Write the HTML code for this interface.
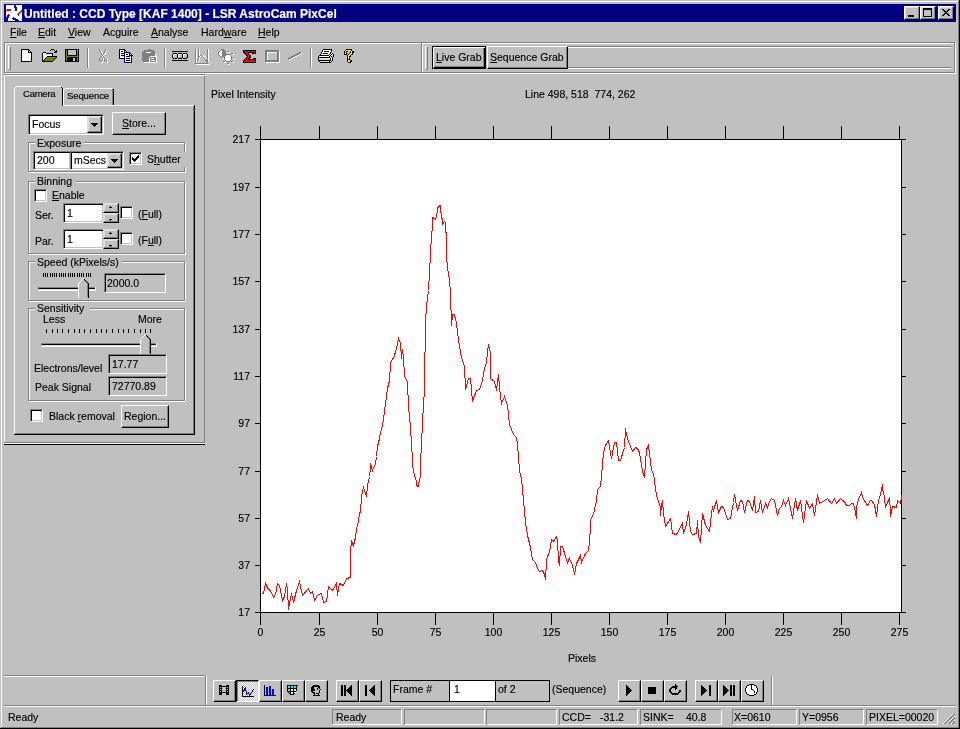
<!DOCTYPE html><html><head><meta charset="utf-8"><style>
html,body{margin:0;padding:0}
body{width:960px;height:729px;overflow:hidden;background:#c0c0c0;position:relative;font-family:"Liberation Sans",sans-serif;font-size:10.5px;color:#000}
.a{position:absolute}
.t{position:absolute;white-space:pre;line-height:13px;will-change:transform;-webkit-text-stroke:0.15px currentColor}
.t u{text-decoration:underline;text-underline-offset:1px}
.btn{position:absolute;box-sizing:border-box;background:#c0c0c0;border:1px solid;border-color:#fff #000 #000 #fff;box-shadow:inset -1px -1px #808080}
.sunk{position:absolute;box-sizing:border-box;background:#fff;border:1px solid;border-color:#808080 #fff #fff #808080;box-shadow:inset 1px 1px #000,inset -1px -1px #c0c0c0}
.grp{position:absolute;box-sizing:border-box;border:1px solid #808080;box-shadow:inset 1px 1px #fff,1px 1px #fff}
.pane{position:absolute;box-sizing:border-box;border:1px solid;border-color:#808080 #fff #fff #808080}
.chk{position:absolute;box-sizing:border-box;width:13px;height:13px;background:#fff;border:1px solid;border-color:#808080 #fff #fff #808080;box-shadow:inset 1px 1px #000,inset -1px -1px #c0c0c0}
.pressed{position:absolute;box-sizing:border-box;border:1px solid;border-color:#808080 #fff #fff #808080;background-color:#e0e0e0;background-image:repeating-conic-gradient(#fff 0 25%,#c0c0c0 0 50%);background-size:2px 2px}
svg{position:absolute;overflow:visible}
</style></head><body>

<div class="a" style="left:1px;top:1px;width:957px;height:1px;background:#fff"></div>
<div class="a" style="left:1px;top:1px;width:1px;height:726px;background:#fff"></div>
<div class="a" style="left:958px;top:1px;width:1px;height:727px;background:#808080"></div>
<div class="a" style="left:1px;top:727px;width:958px;height:1px;background:#808080"></div>
<div class="a" style="left:959px;top:0px;width:1px;height:729px;background:#000"></div>
<div class="a" style="left:0px;top:728px;width:960px;height:1px;background:#000"></div>
<div class="a" style="left:4px;top:4px;width:952px;height:18px;background:#000080"></div>
<svg style="left:6px;top:5px" width="16" height="16" shape-rendering="crispEdges"><path d="M0 0h8v1h-8zM10 0h6v1h-6zM0 1h8v1h-8zM10 1h6v1h-6zM0 2h8v1h-8zM11 2h5v1h-5zM0 3h9v1h-9zM11 3h5v1h-5zM0 4h1v1h-1zM5 4h4v1h-4zM11 4h5v1h-5zM5 5h4v1h-4zM11 5h4v1h-4zM0 6h14v1h-14zM0 7h13v1h-13zM15 7h1v1h-1zM0 8h12v1h-12zM14 8h2v1h-2zM0 9h2v1h-2zM3 9h8v1h-8zM13 9h3v1h-3zM0 10h1v1h-1zM4 10h8v1h-8zM13 10h3v1h-3zM0 11h1v1h-1zM3 11h13v1h-13zM3 12h4v1h-4zM8 12h8v1h-8zM2 13h4v1h-4zM10 13h6v1h-6zM2 14h5v1h-5zM12 14h4v1h-4zM2 15h7v1h-7zM13 15h3v1h-3z" fill="#fff"/><path d="M8 0h2v1h-2zM8 1h2v1h-2zM8 2h3v1h-3zM9 3h2v1h-2zM9 4h2v1h-2zM9 5h2v1h-2zM2 9h1v1h-1zM1 10h3v1h-3zM1 11h2v1h-2zM0 12h3v1h-3zM7 12h1v1h-1zM0 13h2v1h-2zM6 13h4v1h-4zM0 14h2v1h-2zM7 14h5v1h-5zM0 15h2v1h-2zM9 15h4v1h-4z" fill="#00f"/><path d="M1 4h4v1h-4zM0 5h5v1h-5zM15 5h1v1h-1zM14 6h2v1h-2zM13 7h2v1h-2zM12 8h2v1h-2zM11 9h2v1h-2zM12 10h1v1h-1z" fill="#f00"/></svg>
<div class="t" style="left:24px;top:8px;font-size:12px;color:#fff;font-weight:bold;">Untitled : CCD Type [KAF 1400] - LSR AstroCam PixCel</div>
<div class="btn" style="left:904px;top:6px;width:16px;height:14px;box-shadow:inset -1px -1px #808080, inset 1px 1px #dfdfdf"></div>
<div class="a" style="left:908px;top:15px;width:6px;height:2px;background:#000"></div>
<div class="btn" style="left:920px;top:6px;width:16px;height:14px;box-shadow:inset -1px -1px #808080, inset 1px 1px #dfdfdf"></div>
<div class="a" style="left:923px;top:8px;width:7px;height:6px;border:1px solid #000;border-top-width:2px"></div>
<div class="btn" style="left:938px;top:6px;width:16px;height:14px;box-shadow:inset -1px -1px #808080, inset 1px 1px #dfdfdf"></div>
<svg style="left:938px;top:6px" width="16" height="14" shape-rendering="crispEdges"><path d="M4 3h2v1h1v1h2v-1h1v-1h2v1h-1v1h-1v1h-1v1h1v1h1v1h1v1h-2v-1h-1v-1h-2v1h-1v1h-2v-1h1v-1h1v-1h1v-1h-1v-1h-1v-1h-1z" fill="#000"/></svg>
<div class="t" style="left:10px;top:26px;"><u>F</u>ile</div>
<div class="t" style="left:38px;top:26px;"><u>E</u>dit</div>
<div class="t" style="left:68px;top:26px;"><u>V</u>iew</div>
<div class="t" style="left:103px;top:26px;">Acguire</div>
<div class="t" style="left:151px;top:26px;"><u>A</u>nalyse</div>
<div class="t" style="left:201px;top:26px;">Hard<u>w</u>are</div>
<div class="t" style="left:258px;top:26px;"><u>H</u>elp</div>
<div class="grp" style="left:4px;top:42px;width:418px;height:31px;"></div>
<div class="grp" style="left:421px;top:42px;width:534px;height:31px;"></div>
<div class="a" style="left:8px;top:46px;width:3px;height:24px;box-sizing:border-box;border:1px solid;border-color:#fff #808080 #808080 #fff"></div>
<div class="a" style="left:425px;top:46px;width:3px;height:24px;box-sizing:border-box;border:1px solid;border-color:#fff #808080 #808080 #fff"></div>
<div class="a" style="left:87px;top:48px;width:1px;height:20px;background:#808080"></div>
<div class="a" style="left:88px;top:48px;width:1px;height:20px;background:#fff"></div>
<div class="a" style="left:164px;top:48px;width:1px;height:20px;background:#808080"></div>
<div class="a" style="left:165px;top:48px;width:1px;height:20px;background:#fff"></div>
<div class="a" style="left:310px;top:48px;width:1px;height:20px;background:#808080"></div>
<div class="a" style="left:311px;top:48px;width:1px;height:20px;background:#fff"></div>
<div class="a" style="left:432px;top:46px;width:54px;height:23px;box-sizing:border-box;border:1px solid #000;background:#c0c0c0;box-shadow:inset 1px 1px #fff,inset -1px -1px #000,inset -2px -2px #808080"></div>
<div class="t" style="left:436px;top:51px;"><u>L</u>ive Grab</div>
<div class="btn" style="left:487px;top:46px;width:81px;height:23px;"></div>
<div class="t" style="left:490px;top:51px;"><u>S</u>equence Grab</div>
<div class="a" style="left:568px;top:46px;width:383px;height:1px;background:#808080"></div>
<div class="a" style="left:568px;top:47px;width:383px;height:1px;background:#fff"></div>
<div class="a" style="left:568px;top:67px;width:383px;height:1px;background:#808080"></div>
<div class="a" style="left:568px;top:68px;width:383px;height:1px;background:#fff"></div>
<div class="a" style="left:4px;top:74px;width:201px;height:1px;background:#808080"></div>
<div class="a" style="left:4px;top:75px;width:201px;height:1px;background:#fff"></div>
<div class="a" style="left:4px;top:75px;width:1px;height:367px;background:#fff"></div>
<div class="a" style="left:204px;top:76px;width:1px;height:367px;background:#808080"></div>
<div class="a" style="left:4px;top:442px;width:201px;height:1px;background:#808080"></div>
<div class="a" style="left:4px;top:443px;width:201px;height:1px;background:#fff"></div>
<div class="a" style="left:4px;top:444px;width:201px;height:1px;background:#000"></div>
<div class="a" style="left:14px;top:105px;width:1px;height:330px;background:#fff"></div>
<div class="a" style="left:14px;top:105px;width:181px;height:1px;background:#fff"></div>
<div class="a" style="left:194px;top:105px;width:1px;height:330px;background:#000"></div>
<div class="a" style="left:193px;top:106px;width:1px;height:328px;background:#808080"></div>
<div class="a" style="left:14px;top:434px;width:181px;height:1px;background:#000"></div>
<div class="a" style="left:15px;top:433px;width:179px;height:1px;background:#808080"></div>
<div class="a" style="left:63px;top:89px;width:1px;height:16px;background:#fff"></div>
<div class="a" style="left:65px;top:88px;width:47px;height:1px;background:#fff"></div>
<div class="a" style="left:64px;top:89px;width:1px;height:1px;background:#fff"></div>
<div class="a" style="left:113px;top:89px;width:1px;height:16px;background:#000"></div>
<div class="a" style="left:112px;top:89px;width:1px;height:16px;background:#808080"></div>
<div class="t" style="left:67px;top:91px;font-size:9.6px;top:89px;letter-spacing:-0.15px">Sequence</div>
<div class="a" style="left:15px;top:87px;width:47px;height:19px;background:#c0c0c0"></div>
<div class="a" style="left:14px;top:88px;width:1px;height:18px;background:#fff"></div>
<div class="a" style="left:16px;top:86px;width:45px;height:1px;background:#fff"></div>
<div class="a" style="left:15px;top:87px;width:1px;height:1px;background:#fff"></div>
<div class="a" style="left:62px;top:88px;width:1px;height:18px;background:#000"></div>
<div class="a" style="left:61px;top:87px;width:1px;height:1px;background:#000"></div>
<div class="t" style="left:23px;top:88px;font-size:9.6px;top:87px;letter-spacing:-0.3px">Camera</div>
<div class="sunk" style="left:28px;top:114px;width:76px;height:21px;"></div>
<div class="btn" style="left:87px;top:116px;width:15px;height:17px;box-shadow:inset -1px -1px #808080, inset 1px 1px #dfdfdf;border-color:#dfdfdf #000 #000 #dfdfdf"></div>
<svg style="left:91px;top:123px" width="7" height="4" shape-rendering="crispEdges"><path d="M0 0h7v1h-1v1h-1v1h-1v1h-1v-1h-1v-1h-1v-1h-1z" fill="#000"/></svg>
<div class="t" style="left:32px;top:118px;">Focus</div>
<div class="btn" style="left:112px;top:112px;width:54px;height:23px;"></div>
<div class="t" style="left:122px;top:117px;"><u>S</u>tore...</div>
<div class="grp" style="left:28px;top:142px;width:157px;height:30px;"></div>
<div class="a" style="left:35px;top:141px;width:49px;height:3px;background:#c0c0c0"></div>
<div class="t" style="left:37px;top:137px;">Exposure</div>
<div class="sunk" style="left:33px;top:151px;width:38px;height:19px;"></div>
<div class="t" style="left:37px;top:154px;">200</div>
<div class="sunk" style="left:70px;top:151px;width:54px;height:19px;"></div>
<div class="btn" style="left:107px;top:153px;width:15px;height:15px;box-shadow:inset -1px -1px #808080, inset 1px 1px #dfdfdf;border-color:#dfdfdf #000 #000 #dfdfdf"></div>
<svg style="left:111px;top:159px" width="7" height="4" shape-rendering="crispEdges"><path d="M0 0h7v1h-1v1h-1v1h-1v1h-1v-1h-1v-1h-1v-1h-1z" fill="#000"/></svg>
<div class="t" style="left:74px;top:154px;">mSecs</div>
<div class="chk" style="left:129px;top:152px;width:13px;height:13px;"></div>
<svg style="left:132px;top:155px" width="7" height="7" shape-rendering="crispEdges"><path d="M6 0h1v3h-1v1h-1v1h-1v1h-1v1h-1v-1h-1v-1h-1v-3h1v1h1v1h1v-1h1v-1h1v-1h1z" fill="#000"/></svg>
<div class="t" style="left:147px;top:153px;">S<u>h</u>utter</div>
<div class="a" style="left:184px;top:152px;width:2px;height:15px;background:#c0c0c0"></div>
<div class="grp" style="left:28px;top:181px;width:157px;height:73px;"></div>
<div class="a" style="left:35px;top:180px;width:41px;height:3px;background:#c0c0c0"></div>
<div class="t" style="left:37px;top:175px;">Binning</div>
<div class="chk" style="left:34px;top:189px;width:13px;height:13px;"></div>
<div class="t" style="left:52px;top:189px;"><u>E</u>nable</div>
<div class="t" style="left:35px;top:209px;">Ser.</div>
<div class="sunk" style="left:63px;top:203px;width:41px;height:20px;"></div>
<div class="t" style="left:67px;top:207px;">1</div>
<div class="btn" style="left:103px;top:203px;width:16px;height:10px;box-shadow:inset -1px -1px #808080, inset 1px 1px #dfdfdf;border-color:#dfdfdf #000 #000 #dfdfdf"></div>
<div class="btn" style="left:103px;top:213px;width:16px;height:10px;box-shadow:inset -1px -1px #808080, inset 1px 1px #dfdfdf;border-color:#dfdfdf #000 #000 #dfdfdf"></div>
<svg style="left:109px;top:206px" width="3" height="2" shape-rendering="crispEdges"><path d="M1 0h1v1h1v1h-3v-1h1z" fill="#000"/></svg>
<svg style="left:109px;top:219px" width="3" height="2" shape-rendering="crispEdges"><path d="M0 0h3v1h-1v1h-1v-1h-1z" fill="#000"/></svg>
<div class="chk" style="left:120px;top:206px;width:13px;height:13px;"></div>
<div class="t" style="left:138px;top:208px;">(<u>F</u>ull)</div>
<div class="t" style="left:35px;top:235px;">Par.</div>
<div class="sunk" style="left:63px;top:229px;width:41px;height:20px;"></div>
<div class="t" style="left:67px;top:233px;">1</div>
<div class="btn" style="left:103px;top:229px;width:16px;height:10px;box-shadow:inset -1px -1px #808080, inset 1px 1px #dfdfdf;border-color:#dfdfdf #000 #000 #dfdfdf"></div>
<div class="btn" style="left:103px;top:239px;width:16px;height:10px;box-shadow:inset -1px -1px #808080, inset 1px 1px #dfdfdf;border-color:#dfdfdf #000 #000 #dfdfdf"></div>
<svg style="left:109px;top:232px" width="3" height="2" shape-rendering="crispEdges"><path d="M1 0h1v1h1v1h-3v-1h1z" fill="#000"/></svg>
<svg style="left:109px;top:245px" width="3" height="2" shape-rendering="crispEdges"><path d="M0 0h3v1h-1v1h-1v-1h-1z" fill="#000"/></svg>
<div class="chk" style="left:120px;top:232px;width:13px;height:13px;"></div>
<div class="t" style="left:138px;top:234px;">(F<u>u</u>ll)</div>
<div class="grp" style="left:28px;top:261px;width:157px;height:40px;"></div>
<div class="a" style="left:35px;top:260px;width:87px;height:3px;background:#c0c0c0"></div>
<div class="t" style="left:37px;top:256px;">Speed (kPixels/s)</div>
<svg style="left:43px;top:273px" width="49" height="4" shape-rendering="crispEdges" fill="#000"><rect x="0" y="0" width="1" height="4"/><rect x="2" y="0" width="1" height="4"/><rect x="4" y="0" width="1" height="4"/><rect x="7" y="0" width="1" height="4"/><rect x="9" y="0" width="1" height="4"/><rect x="11" y="0" width="1" height="4"/><rect x="13" y="0" width="1" height="4"/><rect x="16" y="0" width="1" height="4"/><rect x="18" y="0" width="1" height="4"/><rect x="20" y="0" width="1" height="4"/><rect x="22" y="0" width="1" height="4"/><rect x="25" y="0" width="1" height="4"/><rect x="27" y="0" width="1" height="4"/><rect x="29" y="0" width="1" height="4"/><rect x="31" y="0" width="1" height="4"/><rect x="34" y="0" width="1" height="4"/><rect x="36" y="0" width="1" height="4"/><rect x="38" y="0" width="1" height="4"/><rect x="40" y="0" width="1" height="4"/><rect x="43" y="0" width="1" height="4"/><rect x="45" y="0" width="1" height="4"/><rect x="47" y="0" width="1" height="4"/></svg>
<div class="a" style="left:38px;top:287px;width:58px;height:1px;background:#808080"></div>
<div class="a" style="left:39px;top:288px;width:56px;height:1px;background:#000"></div>
<div class="a" style="left:39px;top:289px;width:56px;height:1px;background:#dfdfdf"></div>
<div class="a" style="left:38px;top:290px;width:58px;height:1px;background:#fff"></div>
<div class="a" style="left:95px;top:287px;width:1px;height:4px;background:#fff"></div>
<div class="a" style="left:38px;top:287px;width:1px;height:3px;background:#808080"></div>
<svg style="left:78px;top:278px" width="11" height="20" shape-rendering="crispEdges">
<path d="M5 0h1v1h1v1h1v1h1v1h1v1h1v15h-11v-15h1v-1h1v-1h1v-1h1v-1h1z" fill="#c0c0c0"/>
<path d="M5 0h1v1h-1v1h-1v1h-1v1h-1v1h-1v15h-1v-15h1v-1h1v-1h1v-1h1v-1z" fill="#fff"/>
<path d="M6 1h1v1h1v1h1v1h1v1h1v15h-1v-15h-1v-1h-1v-1h-1v-1h-1z" fill="#000"/>
<path d="M6 2h1v1h1v1h1v1h1v14h-1v-14h-1v-1h-1v-1h-1z" fill="#808080"/>
</svg>
<div class="sunk" style="left:104px;top:273px;width:62px;height:20px;background:#c0c0c0"></div>
<div class="t" style="left:107px;top:277px;">2000.0</div>
<div class="grp" style="left:28px;top:308px;width:157px;height:93px;"></div>
<div class="a" style="left:35px;top:307px;width:55px;height:3px;background:#c0c0c0"></div>
<div class="t" style="left:37px;top:302px;">Sensitivity</div>
<div class="t" style="left:43px;top:313px;">Less</div>
<div class="t" style="left:138px;top:313px;">More</div>
<svg style="left:46px;top:329px" width="110" height="4" shape-rendering="crispEdges" fill="#000"><rect x="0" y="0" width="1" height="4"/><rect x="6" y="0" width="1" height="4"/><rect x="11" y="0" width="1" height="4"/><rect x="16" y="0" width="1" height="4"/><rect x="22" y="0" width="1" height="4"/><rect x="28" y="0" width="1" height="4"/><rect x="33" y="0" width="1" height="4"/><rect x="38" y="0" width="1" height="4"/><rect x="44" y="0" width="1" height="4"/><rect x="50" y="0" width="1" height="4"/><rect x="55" y="0" width="1" height="4"/><rect x="60" y="0" width="1" height="4"/><rect x="66" y="0" width="1" height="4"/><rect x="72" y="0" width="1" height="4"/><rect x="77" y="0" width="1" height="4"/><rect x="82" y="0" width="1" height="4"/><rect x="88" y="0" width="1" height="4"/><rect x="94" y="0" width="1" height="4"/><rect x="99" y="0" width="1" height="4"/><rect x="104" y="0" width="1" height="4"/></svg>
<div class="a" style="left:41px;top:343px;width:116px;height:1px;background:#808080"></div>
<div class="a" style="left:42px;top:344px;width:114px;height:1px;background:#000"></div>
<div class="a" style="left:42px;top:345px;width:114px;height:1px;background:#dfdfdf"></div>
<div class="a" style="left:41px;top:346px;width:116px;height:1px;background:#fff"></div>
<div class="a" style="left:156px;top:343px;width:1px;height:4px;background:#fff"></div>
<div class="a" style="left:41px;top:343px;width:1px;height:3px;background:#808080"></div>
<svg style="left:140px;top:334px" width="11" height="20" shape-rendering="crispEdges">
<path d="M5 0h1v1h1v1h1v1h1v1h1v1h1v15h-11v-15h1v-1h1v-1h1v-1h1v-1h1z" fill="#c0c0c0"/>
<path d="M5 0h1v1h-1v1h-1v1h-1v1h-1v1h-1v15h-1v-15h1v-1h1v-1h1v-1h1v-1z" fill="#fff"/>
<path d="M6 1h1v1h1v1h1v1h1v1h1v15h-1v-15h-1v-1h-1v-1h-1v-1h-1z" fill="#000"/>
<path d="M6 2h1v1h1v1h1v1h1v14h-1v-14h-1v-1h-1v-1h-1z" fill="#808080"/>
</svg>
<div class="t" style="left:34px;top:362px;">Electrons/level</div>
<div class="sunk" style="left:108px;top:354px;width:59px;height:20px;background:#c0c0c0"></div>
<div class="t" style="left:112px;top:358px;">17.77</div>
<div class="t" style="left:35px;top:381px;">Peak Signal</div>
<div class="sunk" style="left:108px;top:376px;width:59px;height:20px;background:#c0c0c0"></div>
<div class="t" style="left:112px;top:380px;">72770.89</div>
<div class="chk" style="left:30px;top:409px;width:13px;height:13px;"></div>
<div class="t" style="left:49px;top:410px;">Black <u>r</u>emoval</div>
<div class="btn" style="left:121px;top:405px;width:48px;height:23px;"></div>
<div class="t" style="left:124px;top:410px;">Region...</div>
<div class="t" style="left:211px;top:88px;">Pixel Intensity</div>
<div class="t" style="left:525px;top:88px;">Line 498, 518  774, 262</div>
<svg style="left:0;top:0" width="960" height="729" shape-rendering="crispEdges"><rect x="261" y="140" width="640" height="472" fill="#fff"/><g fill="#000"><rect x="260" y="139" width="1" height="474"/><rect x="901" y="139" width="1" height="474"/><rect x="255" y="139" width="651" height="1"/><rect x="255" y="612" width="651" height="1"/><rect x="255" y="139" width="6" height="1"/><rect x="901" y="139" width="5" height="1"/><rect x="255" y="187" width="6" height="1"/><rect x="901" y="187" width="5" height="1"/><rect x="255" y="234" width="6" height="1"/><rect x="901" y="234" width="5" height="1"/><rect x="255" y="281" width="6" height="1"/><rect x="901" y="281" width="5" height="1"/><rect x="255" y="329" width="6" height="1"/><rect x="901" y="329" width="5" height="1"/><rect x="255" y="376" width="6" height="1"/><rect x="901" y="376" width="5" height="1"/><rect x="255" y="423" width="6" height="1"/><rect x="901" y="423" width="5" height="1"/><rect x="255" y="471" width="6" height="1"/><rect x="901" y="471" width="5" height="1"/><rect x="255" y="518" width="6" height="1"/><rect x="901" y="518" width="5" height="1"/><rect x="255" y="565" width="6" height="1"/><rect x="901" y="565" width="5" height="1"/><rect x="255" y="612" width="6" height="1"/><rect x="901" y="612" width="5" height="1"/><rect x="260" y="126" width="1" height="13"/><rect x="260" y="612" width="1" height="13"/><rect x="319" y="126" width="1" height="13"/><rect x="319" y="612" width="1" height="13"/><rect x="377" y="126" width="1" height="13"/><rect x="377" y="612" width="1" height="13"/><rect x="435" y="126" width="1" height="13"/><rect x="435" y="612" width="1" height="13"/><rect x="493" y="126" width="1" height="13"/><rect x="493" y="612" width="1" height="13"/><rect x="551" y="126" width="1" height="13"/><rect x="551" y="612" width="1" height="13"/><rect x="609" y="126" width="1" height="13"/><rect x="609" y="612" width="1" height="13"/><rect x="667" y="126" width="1" height="13"/><rect x="667" y="612" width="1" height="13"/><rect x="725" y="126" width="1" height="13"/><rect x="725" y="612" width="1" height="13"/><rect x="783" y="126" width="1" height="13"/><rect x="783" y="612" width="1" height="13"/><rect x="841" y="126" width="1" height="13"/><rect x="841" y="612" width="1" height="13"/><rect x="899" y="126" width="1" height="13"/><rect x="899" y="612" width="1" height="13"/></g><polyline points="261.5,593.5 263.5,593.5 265.5,583.5 268.5,589.5 270.5,590.5 273.5,597.5 275.5,594.5 277.5,583.5 279.5,585.5 282.5,600.5 284.5,596.5 286.5,583.5 287.5,589.5 288.5,609.5 289.5,603.5 291.5,593.5 293.5,602.5 296.5,590.5 299.5,581.5 302.5,595.5 308.5,588.5 310.5,593.5 312.5,591.5 314.5,600.5 317.5,595.5 320.5,593.5 321.5,593.5 323.5,602.5 326.5,601.5 328.5,586.5 332.5,590.5 336.5,583.5 337.5,595.5 339.5,583.5 343.5,585.5 346.5,578.5 350.5,577.5 350.5,568.5 350.5,550.5 351.5,541.5 353.5,545.5 355.5,537.5 356.5,529.5 358.5,520.5 359.5,514.5 360.5,510.5 361.5,497.5 362.5,490.5 363.5,487.5 366.5,496.5 367.5,485.5 369.5,476.5 370.5,468.5 370.5,463.5 372.5,470.5 375.5,463.5 376.5,456.5 377.5,446.5 379.5,438.5 380.5,432.5 382.5,425.5 383.5,418.5 386.5,396.5 387.5,388.5 389.5,380.5 390.5,363.5 392.5,358.5 393.5,358.5 396.5,348.5 398.5,338.5 400.5,343.5 401.5,358.5 402.5,349.5 403.5,357.5 404.5,376.5 407.5,381.5 408.5,407.5 410.5,426.5 411.5,445.5 412.5,458.5 412.5,464.5 413.5,470.5 414.5,475.5 416.5,481.5 416.5,485.5 418.5,486.5 419.5,478.5 420.5,477.5 420.5,461.5 421.5,445.5 422.5,421.5 424.5,389.5 424.5,362.5 425.5,341.5 425.5,323.5 426.5,305.5 428.5,290.5 429.5,271.5 430.5,254.5 430.5,250.5 431.5,237.5 432.5,224.5 432.5,217.5 434.5,218.5 435.5,219.5 436.5,216.5 437.5,210.5 437.5,208.5 438.5,206.5 440.5,205.5 440.5,209.5 441.5,215.5 442.5,221.5 442.5,224.5 444.5,221.5 445.5,222.5 445.5,232.5 446.5,232.5 446.5,255.5 447.5,267.5 449.5,279.5 450.5,294.5 451.5,325.5 452.5,314.5 454.5,314.5 456.5,323.5 457.5,331.5 458.5,339.5 461.5,357.5 464.5,366.5 465.5,389.5 468.5,378.5 470.5,378.5 472.5,401.5 476.5,390.5 479.5,389.5 482.5,380.5 484.5,368.5 486.5,362.5 487.5,351.5 488.5,344.5 490.5,353.5 490.5,378.5 494.5,381.5 496.5,390.5 498.5,374.5 499.5,387.5 501.5,403.5 504.5,396.5 507.5,405.5 509.5,424.5 513.5,434.5 516.5,437.5 517.5,444.5 519.5,470.5 521.5,478.5 523.5,500.5 525.5,522.5 527.5,535.5 530.5,547.5 530.5,548.5 532.5,559.5 535.5,562.5 537.5,568.5 539.5,571.5 542.5,570.5 544.5,574.5 545.5,579.5 546.5,561.5 547.5,555.5 548.5,555.5 550.5,547.5 551.5,539.5 553.5,541.5 556.5,536.5 557.5,541.5 558.5,560.5 559.5,565.5 560.5,546.5 562.5,546.5 565.5,556.5 567.5,562.5 569.5,558.5 572.5,565.5 574.5,574.5 576.5,563.5 580.5,555.5 581.5,562.5 585.5,553.5 588.5,550.5 589.5,541.5 590.5,527.5 590.5,519.5 593.5,514.5 596.5,500.5 597.5,489.5 600.5,486.5 601.5,476.5 602.5,464.5 603.5,452.5 605.5,445.5 608.5,440.5 611.5,458.5 614.5,442.5 616.5,442.5 618.5,460.5 620.5,460.5 624.5,447.5 625.5,428.5 626.5,434.5 628.5,441.5 632.5,451.5 635.5,447.5 637.5,448.5 639.5,452.5 642.5,471.5 644.5,477.5 646.5,449.5 648.5,445.5 651.5,470.5 653.5,473.5 656.5,495.5 660.5,507.5 660.5,515.5 661.5,505.5 662.5,500.5 663.5,513.5 665.5,526.5 670.5,518.5 672.5,533.5 676.5,534.5 682.5,523.5 683.5,533.5 686.5,524.5 688.5,511.5 690.5,531.5 692.5,534.5 696.5,533.5 697.5,520.5 698.5,536.5 700.5,542.5 701.5,527.5 702.5,513.5 705.5,525.5 709.5,531.5 711.5,513.5 712.5,506.5 713.5,510.5 716.5,500.5 718.5,512.5 721.5,506.5 723.5,507.5 727.5,519.5 730.5,518.5 733.5,502.5 734.5,494.5 737.5,510.5 740.5,500.5 742.5,501.5 744.5,512.5 747.5,500.5 749.5,501.5 752.5,510.5 754.5,496.5 755.5,512.5 758.5,511.5 760.5,500.5 762.5,512.5 765.5,503.5 767.5,507.5 769.5,501.5 771.5,498.5 774.5,500.5 777.5,515.5 779.5,508.5 781.5,506.5 783.5,500.5 785.5,505.5 788.5,498.5 792.5,518.5 795.5,498.5 797.5,510.5 800.5,500.5 803.5,522.5 806.5,500.5 809.5,508.5 812.5,503.5 814.5,515.5 817.5,494.5 819.5,503.5 824.5,500.5 827.5,498.5 831.5,503.5 834.5,498.5 836.5,503.5 840.5,498.5 842.5,500.5 844.5,501.5 846.5,505.5 849.5,505.5 851.5,503.5 853.5,503.5 855.5,512.5 856.5,518.5 856.5,506.5 858.5,499.5 861.5,492.5 862.5,497.5 867.5,505.5 870.5,500.5 871.5,500.5 874.5,504.5 876.5,516.5 878.5,500.5 880.5,494.5 882.5,484.5 882.5,488.5 884.5,497.5 885.5,507.5 887.5,502.5 889.5,498.5 890.5,511.5 890.5,516.5 892.5,506.5 896.5,507.5 897.5,500.5 900.5,503.5 901.5,496.5 901.5,494.5" fill="none" stroke="#f00" stroke-width="1"/></svg>
<div class="t" style="left:200px;width:50px;text-align:right;top:133px">217</div>
<div class="t" style="left:200px;width:50px;text-align:right;top:181px">197</div>
<div class="t" style="left:200px;width:50px;text-align:right;top:228px">177</div>
<div class="t" style="left:200px;width:50px;text-align:right;top:275px">157</div>
<div class="t" style="left:200px;width:50px;text-align:right;top:323px">137</div>
<div class="t" style="left:200px;width:50px;text-align:right;top:370px">117</div>
<div class="t" style="left:200px;width:50px;text-align:right;top:417px">97</div>
<div class="t" style="left:200px;width:50px;text-align:right;top:465px">77</div>
<div class="t" style="left:200px;width:50px;text-align:right;top:512px">57</div>
<div class="t" style="left:200px;width:50px;text-align:right;top:559px">37</div>
<div class="t" style="left:200px;width:50px;text-align:right;top:606px">17</div>
<div class="t" style="left:230px;width:61px;text-align:center;top:626px">0</div>
<div class="t" style="left:289px;width:61px;text-align:center;top:626px">25</div>
<div class="t" style="left:347px;width:61px;text-align:center;top:626px">50</div>
<div class="t" style="left:405px;width:61px;text-align:center;top:626px">75</div>
<div class="t" style="left:463px;width:61px;text-align:center;top:626px">100</div>
<div class="t" style="left:521px;width:61px;text-align:center;top:626px">125</div>
<div class="t" style="left:579px;width:61px;text-align:center;top:626px">150</div>
<div class="t" style="left:637px;width:61px;text-align:center;top:626px">175</div>
<div class="t" style="left:695px;width:61px;text-align:center;top:626px">200</div>
<div class="t" style="left:753px;width:61px;text-align:center;top:626px">225</div>
<div class="t" style="left:811px;width:61px;text-align:center;top:626px">250</div>
<div class="t" style="left:869px;width:61px;text-align:center;top:626px">275</div>
<div class="t" style="left:568px;top:652px;">Pixels</div>
<div class="a" style="left:4px;top:675px;width:202px;height:1px;background:#808080"></div>
<div class="a" style="left:4px;top:676px;width:202px;height:1px;background:#fff"></div>
<div class="a" style="left:205px;top:675px;width:1px;height:31px;background:#808080"></div>
<div class="a" style="left:206px;top:675px;width:1px;height:31px;background:#fff"></div>
<div class="a" style="left:4px;top:705px;width:952px;height:1px;background:#808080"></div>
<div class="a" style="left:4px;top:706px;width:952px;height:1px;background:#fff"></div>
<div class="a" style="left:771px;top:676px;width:1px;height:29px;background:#808080"></div>
<div class="a" style="left:772px;top:676px;width:1px;height:29px;background:#fff"></div>
<div class="btn" style="left:213px;top:680px;width:23px;height:22px;"></div>
<div class="a" style="left:236px;top:680px;width:23px;height:22px;box-sizing:border-box;border:1px solid;border-color:#000 #fff #fff #000;box-shadow:inset 1px 1px #808080;background-color:#c0c0c0;background-image:repeating-conic-gradient(#fff 0 25%,#c0c0c0 0 50%);background-size:2px 2px"></div>
<div class="btn" style="left:259px;top:680px;width:23px;height:22px;"></div>
<div class="btn" style="left:282px;top:680px;width:23px;height:22px;"></div>
<div class="btn" style="left:305px;top:680px;width:23px;height:22px;"></div>
<div class="btn" style="left:336px;top:680px;width:23px;height:22px;"></div>
<div class="btn" style="left:359px;top:680px;width:23px;height:22px;"></div>
<div class="btn" style="left:618px;top:680px;width:23px;height:22px;"></div>
<div class="btn" style="left:641px;top:680px;width:23px;height:22px;"></div>
<div class="btn" style="left:664px;top:680px;width:23px;height:22px;"></div>
<div class="btn" style="left:695px;top:680px;width:23px;height:22px;"></div>
<div class="btn" style="left:718px;top:680px;width:23px;height:22px;"></div>
<div class="btn" style="left:741px;top:680px;width:23px;height:22px;"></div>
<div class="a" style="left:390px;top:680px;width:60px;height:22px;box-sizing:border-box;border:1px solid #000;background:#c0c0c0"></div>
<div class="a" style="left:449px;top:680px;width:47px;height:22px;box-sizing:border-box;border:1px solid #000;background:#fff"></div>
<div class="a" style="left:495px;top:680px;width:55px;height:22px;box-sizing:border-box;border:1px solid #000;background:#c0c0c0"></div>
<div class="t" style="left:393px;top:683px;">Frame #</div>
<div class="t" style="left:454px;top:683px;">1</div>
<div class="t" style="left:498px;top:683px;">of 2</div>
<div class="t" style="left:552px;top:683px;">(Sequence)</div>
<div class="t" style="left:8px;top:711px;">Ready</div>
<div class="pane" style="left:332px;top:709px;width:70px;height:16px;"></div>
<div class="pane" style="left:404px;top:709px;width:81px;height:16px;"></div>
<div class="pane" style="left:486px;top:709px;width:71px;height:16px;"></div>
<div class="pane" style="left:559px;top:709px;width:79px;height:16px;"></div>
<div class="pane" style="left:640px;top:709px;width:82px;height:16px;"></div>
<div class="pane" style="left:732px;top:709px;width:65px;height:16px;"></div>
<div class="pane" style="left:799px;top:709px;width:65px;height:16px;"></div>
<div class="pane" style="left:866px;top:709px;width:72px;height:16px;"></div>
<div class="t" style="left:336px;top:711px;">Ready</div>
<div class="t" style="left:562px;top:711px;">CCD=</div>
<div class="t" style="left:600px;top:711px;">-31.2</div>
<div class="t" style="left:643px;top:711px;">SINK=</div>
<div class="t" style="left:686px;top:711px;">40.8</div>
<div class="t" style="left:734px;top:711px;">X=0610</div>
<div class="t" style="left:802px;top:711px;">Y=0956</div>
<div class="t" style="left:869px;top:711px;">PIXEL=00020</div>
<svg style="left:943px;top:712px" width="13" height="13" shape-rendering="crispEdges">
<path d="M12 0v1h-1v1h-1v1h-1v1h-1v1h-1v1h-1v1h-1v1h-1v1h-1v1h-1v1h-1v1h-1v-1h1v-1h1v-1h1v-1h1v-1h1v-1h1v-1h1v-1h1v-1h1v-1h1v-1h1z" fill="#fff"/>
<path d="M12 1v2h-1v1h-1v1h-1v1h-1v1h-1v1h-1v1h-1v1h-1v1h-1v1h-2v-1h1v-1h1v-1h1v-1h1v-1h1v-1h1v-1h1v-1h1v-1h1v-1h1v-1z" fill="#808080"/>
<path d="M12 4v1h-1v1h-1v1h-1v1h-1v1h-1v1h-1v1h-1v1h-1v-1h1v-1h1v-1h1v-1h1v-1h1v-1h1v-1h1v-1z" fill="#fff"/>
<path d="M12 5v2h-1v1h-1v1h-1v1h-1v1h-1v1h-2v-1h1v-1h1v-1h1v-1h1v-1h1v-1h1v-1z" fill="#808080"/>
<path d="M12 8v1h-1v1h-1v1h-1v1h-1v-1h1v-1h1v-1h1v-1z" fill="#fff"/>
<path d="M12 9v2h-1v1h-2v-1h1v-1h1v-1z" fill="#808080"/>
</svg>
<svg style="left:21px;top:49px" width="11" height="13" shape-rendering="crispEdges"><path d="M0 0h8v1h-8zM0 1h1v1h-1zM7 1h2v1h-2zM0 2h1v1h-1zM7 2h1v1h-1zM9 2h1v1h-1zM0 3h1v1h-1zM7 3h4v1h-4zM0 4h1v1h-1zM10 4h1v1h-1zM0 5h1v1h-1zM10 5h1v1h-1zM0 6h1v1h-1zM10 6h1v1h-1zM0 7h1v1h-1zM10 7h1v1h-1zM0 8h1v1h-1zM10 8h1v1h-1zM0 9h1v1h-1zM10 9h1v1h-1zM0 10h1v1h-1zM10 10h1v1h-1zM0 11h1v1h-1zM10 11h1v1h-1zM0 12h11v1h-11z" fill="#000"/><path d="M1 1h6v1h-6zM1 2h6v1h-6zM8 2h1v1h-1zM1 3h6v1h-6zM1 4h9v1h-9zM1 5h9v1h-9zM1 6h9v1h-9zM1 7h9v1h-9zM1 8h9v1h-9zM1 9h9v1h-9zM1 10h9v1h-9zM1 11h9v1h-9z" fill="#fff"/></svg>
<svg style="left:41px;top:49px" width="17" height="13" shape-rendering="crispEdges"><path d="M10 0h3v1h-3zM9 1h1v1h-1zM13 1h1v1h-1zM15 1h1v1h-1zM14 2h2v1h-2zM2 3h3v1h-3zM13 3h3v1h-3zM1 4h1v1h-1zM5 4h7v1h-7zM1 5h1v1h-1zM11 5h1v1h-1zM1 6h1v1h-1zM11 6h1v1h-1zM1 7h1v1h-1zM6 7h10v1h-10zM1 8h1v1h-1zM5 8h1v1h-1zM15 8h1v1h-1zM1 9h1v1h-1zM4 9h1v1h-1zM14 9h1v1h-1zM1 10h1v1h-1zM3 10h1v1h-1zM13 10h1v1h-1zM1 11h2v1h-2zM12 11h1v1h-1zM1 12h11v1h-11z" fill="#000"/><path d="M2 4h1v1h-1zM4 4h1v1h-1zM3 5h1v1h-1zM5 5h1v1h-1zM7 5h1v1h-1zM9 5h1v1h-1zM2 6h1v1h-1zM4 6h1v1h-1zM6 6h1v1h-1zM8 6h1v1h-1zM10 6h1v1h-1zM3 7h1v1h-1zM5 7h1v1h-1zM2 8h1v1h-1zM4 8h1v1h-1zM3 9h1v1h-1zM2 10h1v1h-1z" fill="#fff"/><path d="M3 4h1v1h-1zM2 5h1v1h-1zM4 5h1v1h-1zM6 5h1v1h-1zM8 5h1v1h-1zM10 5h1v1h-1zM3 6h1v1h-1zM5 6h1v1h-1zM7 6h1v1h-1zM9 6h1v1h-1zM2 7h1v1h-1zM4 7h1v1h-1zM3 8h1v1h-1zM2 9h1v1h-1z" fill="#ff0"/><path d="M6 8h9v1h-9zM5 9h9v1h-9zM4 10h9v1h-9zM3 11h9v1h-9z" fill="#808000"/></svg>
<svg style="left:65px;top:49px" width="14" height="13" shape-rendering="crispEdges"><path d="M0 0h14v1h-14zM0 1h1v1h-1zM2 1h1v1h-1zM11 1h1v1h-1zM13 1h1v1h-1zM0 2h1v1h-1zM2 2h1v1h-1zM11 2h1v1h-1zM13 2h1v1h-1zM0 3h1v1h-1zM2 3h1v1h-1zM11 3h1v1h-1zM13 3h1v1h-1zM0 4h1v1h-1zM2 4h1v1h-1zM11 4h1v1h-1zM13 4h1v1h-1zM0 5h1v1h-1zM2 5h1v1h-1zM11 5h1v1h-1zM13 5h1v1h-1zM0 6h1v1h-1zM2 6h10v1h-10zM13 6h1v1h-1zM0 7h1v1h-1zM13 7h1v1h-1zM0 8h1v1h-1zM2 8h10v1h-10zM13 8h1v1h-1zM0 9h1v1h-1zM2 9h6v1h-6zM10 9h2v1h-2zM13 9h1v1h-1zM0 10h1v1h-1zM2 10h6v1h-6zM10 10h2v1h-2zM13 10h1v1h-1zM0 11h1v1h-1zM2 11h6v1h-6zM10 11h2v1h-2zM13 11h1v1h-1zM0 12h14v1h-14z" fill="#000"/><path d="M1 1h1v1h-1zM1 2h1v1h-1zM12 2h1v1h-1zM1 3h1v1h-1zM12 3h1v1h-1zM1 4h1v1h-1zM12 4h1v1h-1zM1 5h1v1h-1zM12 5h1v1h-1zM1 6h1v1h-1zM12 6h1v1h-1zM1 7h12v1h-12zM1 8h1v1h-1zM12 8h1v1h-1zM1 9h1v1h-1zM12 9h1v1h-1zM1 10h1v1h-1zM12 10h1v1h-1zM1 11h1v1h-1zM12 11h1v1h-1z" fill="#808000"/><path d="M3 1h8v1h-8zM3 2h8v1h-8zM3 3h8v1h-8zM3 4h8v1h-8zM3 5h8v1h-8zM8 9h2v1h-2zM8 10h2v1h-2zM8 11h2v1h-2z" fill="#c0c0c0"/><path d="M12 1h1v1h-1z" fill="#fff"/></svg>
<svg style="left:99px;top:49px" width="10" height="14" shape-rendering="crispEdges"><path d="M0 0h1v1h-1zM6 0h1v1h-1zM0 1h1v1h-1zM6 1h1v1h-1zM1 2h1v1h-1zM5 2h1v1h-1zM1 3h1v1h-1zM5 3h1v1h-1zM2 4h1v1h-1zM4 4h1v1h-1zM2 5h1v1h-1zM4 5h1v1h-1zM3 6h1v1h-1zM2 7h1v1h-1zM4 7h1v1h-1zM1 8h2v1h-2zM4 8h2v1h-2zM0 9h1v1h-1zM3 9h1v1h-1zM6 9h1v1h-1zM0 10h1v1h-1zM3 10h1v1h-1zM5 10h1v1h-1zM7 10h1v1h-1zM0 11h1v1h-1zM3 11h1v1h-1zM5 11h1v1h-1zM7 11h1v1h-1zM1 12h2v1h-2zM6 12h2v1h-2z" fill="#808080"/><path d="M1 1h1v1h-1zM7 1h1v1h-1zM2 2h1v1h-1zM7 2h1v1h-1zM2 3h1v1h-1zM6 3h1v1h-1zM3 4h1v1h-1zM6 4h1v1h-1zM3 5h1v1h-1zM5 5h1v1h-1zM4 6h1v1h-1zM3 7h1v1h-1zM5 7h1v1h-1zM3 8h1v1h-1zM6 8h1v1h-1zM2 9h1v1h-1zM4 9h1v1h-1zM7 9h1v1h-1zM4 10h1v1h-1zM8 10h1v1h-1zM4 11h1v1h-1zM8 11h1v1h-1zM3 12h1v1h-1zM8 12h1v1h-1zM2 13h2v1h-2zM7 13h2v1h-2z" fill="#fff"/></svg>
<svg style="left:119px;top:49px" width="15" height="14" shape-rendering="crispEdges"><path d="M0 0h6v1h-6zM0 1h1v1h-1zM5 1h2v1h-2zM0 2h1v1h-1zM2 2h2v1h-2zM5 2h1v1h-1zM7 2h1v1h-1zM0 3h1v1h-1zM0 4h1v1h-1zM2 4h3v1h-3zM0 5h1v1h-1zM7 5h2v1h-2zM0 6h1v1h-1zM2 6h3v1h-3zM0 7h1v1h-1zM7 7h4v1h-4zM0 8h1v1h-1zM0 9h5v1h-5zM7 9h4v1h-4zM7 11h4v1h-4z" fill="#000"/><path d="M1 1h4v1h-4zM1 2h1v1h-1zM4 2h1v1h-1zM6 2h1v1h-1zM1 3h4v1h-4zM1 4h1v1h-1zM6 4h4v1h-4zM1 5h4v1h-4zM6 5h1v1h-1zM9 5h1v1h-1zM11 5h1v1h-1zM1 6h1v1h-1zM6 6h4v1h-4zM1 7h4v1h-4zM6 7h1v1h-1zM11 7h1v1h-1zM1 8h4v1h-4zM6 8h6v1h-6zM6 9h1v1h-1zM11 9h1v1h-1zM6 10h6v1h-6zM6 11h1v1h-1zM11 11h1v1h-1zM6 12h6v1h-6z" fill="#fff"/><path d="M5 3h6v1h-6zM5 4h1v1h-1zM10 4h2v1h-2zM5 5h1v1h-1zM10 5h1v1h-1zM12 5h1v1h-1zM5 6h1v1h-1zM10 6h4v1h-4zM5 7h1v1h-1zM12 7h1v1h-1zM5 8h1v1h-1zM12 8h1v1h-1zM5 9h1v1h-1zM12 9h1v1h-1zM5 10h1v1h-1zM12 10h1v1h-1zM5 11h1v1h-1zM12 11h1v1h-1zM5 12h1v1h-1zM12 12h1v1h-1zM5 13h8v1h-8z" fill="#000080"/></svg>
<svg style="left:142px;top:49px" width="16" height="15" shape-rendering="crispEdges"><path d="M6 0h3v1h-3zM2 1h10v1h-10zM1 2h12v1h-12zM0 3h4v1h-4zM9 3h4v1h-4zM0 4h13v1h-13zM0 5h13v1h-13zM0 6h13v1h-13zM0 7h8v1h-8zM0 8h7v1h-7zM8 8h6v1h-6zM0 9h7v1h-7zM8 9h1v1h-1zM12 9h2v1h-2zM0 10h7v1h-7zM8 10h6v1h-6zM0 11h7v1h-7zM8 11h1v1h-1zM13 11h1v1h-1zM1 12h6v1h-6zM8 12h6v1h-6z" fill="#808080"/><path d="M4 3h5v1h-5zM13 5h1v1h-1zM13 6h1v1h-1zM8 7h7v1h-7zM7 8h1v1h-1zM14 8h1v1h-1zM7 9h1v1h-1zM9 9h3v1h-3zM14 9h1v1h-1zM7 10h1v1h-1zM14 10h1v1h-1zM7 11h1v1h-1zM9 11h4v1h-4zM14 11h1v1h-1zM7 12h1v1h-1zM14 12h1v1h-1zM2 13h13v1h-13z" fill="#fff"/></svg>
<svg style="left:172px;top:51px" width="16" height="10" shape-rendering="crispEdges"><path d="M0 0h16v1h-16zM1 2h4v1h-4zM6 2h4v1h-4zM11 2h4v1h-4zM0 3h1v1h-1zM5 3h1v1h-1zM10 3h1v1h-1zM15 3h1v1h-1zM0 4h1v1h-1zM5 4h1v1h-1zM10 4h1v1h-1zM15 4h1v1h-1zM0 5h1v1h-1zM5 5h1v1h-1zM10 5h1v1h-1zM15 5h1v1h-1zM0 6h1v1h-1zM5 6h1v1h-1zM10 6h1v1h-1zM15 6h1v1h-1zM1 7h4v1h-4zM6 7h4v1h-4zM11 7h4v1h-4zM0 9h16v1h-16z" fill="#000"/><path d="M1 3h3v1h-3zM6 3h3v1h-3zM11 3h3v1h-3zM1 4h1v1h-1zM6 4h1v1h-1zM11 4h1v1h-1zM1 5h1v1h-1zM6 5h1v1h-1zM11 5h1v1h-1z" fill="#fff"/><path d="M4 3h1v1h-1zM9 3h1v1h-1zM14 3h1v1h-1zM2 4h3v1h-3zM7 4h3v1h-3zM12 4h3v1h-3zM2 5h3v1h-3zM7 5h3v1h-3zM12 5h3v1h-3zM1 6h3v1h-3zM6 6h3v1h-3zM11 6h3v1h-3z" fill="#c0c0c0"/><path d="M4 6h1v1h-1zM9 6h1v1h-1zM14 6h1v1h-1z" fill="#808080"/></svg>
<svg style="left:195px;top:49px" width="16" height="16" shape-rendering="crispEdges"><path d="M0 0h1v1h-1zM3 0h1v1h-1zM12 0h1v1h-1zM0 1h1v1h-1zM3 1h1v1h-1zM12 1h1v1h-1zM0 2h1v1h-1zM3 2h1v1h-1zM12 2h1v1h-1zM0 3h1v1h-1zM3 3h1v1h-1zM12 3h1v1h-1zM0 4h1v1h-1zM3 4h1v1h-1zM12 4h1v1h-1zM0 5h1v1h-1zM3 5h1v1h-1zM6 5h1v1h-1zM12 5h1v1h-1zM0 6h1v1h-1zM3 6h1v1h-1zM5 6h1v1h-1zM7 6h1v1h-1zM12 6h1v1h-1zM0 7h1v1h-1zM3 7h2v1h-2zM7 7h1v1h-1zM12 7h1v1h-1zM0 8h1v1h-1zM3 8h1v1h-1zM8 8h1v1h-1zM12 8h1v1h-1zM0 9h1v1h-1zM3 9h1v1h-1zM9 9h1v1h-1zM12 9h1v1h-1zM0 10h1v1h-1zM2 10h2v1h-2zM10 10h1v1h-1zM12 10h1v1h-1zM0 11h1v1h-1zM2 11h1v1h-1zM10 11h3v1h-3zM0 12h1v1h-1zM2 12h1v1h-1zM11 12h2v1h-2zM0 13h1v1h-1zM12 13h1v1h-1zM0 14h14v1h-14z" fill="#808080"/><path d="M1 0h1v1h-1zM4 0h1v1h-1zM13 0h1v1h-1zM1 1h1v1h-1zM4 1h1v1h-1zM13 1h1v1h-1zM1 2h1v1h-1zM4 2h1v1h-1zM13 2h1v1h-1zM1 3h1v1h-1zM4 3h1v1h-1zM13 3h1v1h-1zM1 4h1v1h-1zM4 4h1v1h-1zM13 4h1v1h-1zM1 5h1v1h-1zM4 5h1v1h-1zM7 5h1v1h-1zM13 5h1v1h-1zM1 6h1v1h-1zM4 6h1v1h-1zM6 6h1v1h-1zM8 6h1v1h-1zM13 6h1v1h-1zM1 7h1v1h-1zM5 7h1v1h-1zM8 7h2v1h-2zM13 7h1v1h-1zM1 8h1v1h-1zM4 8h1v1h-1zM9 8h1v1h-1zM13 8h1v1h-1zM1 9h1v1h-1zM4 9h1v1h-1zM10 9h1v1h-1zM13 9h1v1h-1zM1 10h1v1h-1zM4 10h1v1h-1zM11 10h1v1h-1zM13 10h1v1h-1zM1 11h1v1h-1zM3 11h1v1h-1zM13 11h1v1h-1zM1 12h1v1h-1zM3 12h1v1h-1zM13 12h1v1h-1zM1 13h1v1h-1zM3 13h1v1h-1zM13 13h1v1h-1zM14 14h1v1h-1zM1 15h14v1h-14z" fill="#fff"/></svg>
<svg style="left:216px;top:49px" width="20" height="16" shape-rendering="crispEdges"><path d="M5 0h3v1h-3zM4 1h1v1h-1zM6 1h3v1h-3zM3 2h1v1h-1zM6 2h4v1h-4zM11 2h2v1h-2zM2 3h1v1h-1zM6 3h4v1h-4zM2 4h1v1h-1zM6 4h4v1h-4zM15 4h2v1h-2zM2 5h1v1h-1zM6 5h8v1h-8zM3 6h1v1h-1zM6 6h4v1h-4zM14 6h1v1h-1zM4 7h1v1h-1zM6 7h3v1h-3zM15 7h1v1h-1zM5 8h2v1h-2zM8 8h1v1h-1zM15 8h1v1h-1zM17 8h1v1h-1zM8 9h1v1h-1zM15 9h1v1h-1zM8 10h1v1h-1zM15 10h1v1h-1zM9 11h1v1h-1zM14 11h1v1h-1zM7 12h2v1h-2zM10 12h4v1h-4zM15 12h2v1h-2zM11 14h2v1h-2z" fill="#808080"/><path d="M5 1h1v1h-1zM4 2h2v1h-2zM3 3h3v1h-3zM11 3h3v1h-3zM3 4h3v1h-3zM3 5h3v1h-3zM16 5h2v1h-2zM4 6h2v1h-2zM10 6h4v1h-4zM5 7h1v1h-1zM9 7h6v1h-6zM9 8h6v1h-6zM6 9h2v1h-2zM9 9h6v1h-6zM18 9h1v1h-1zM9 10h6v1h-6zM18 10h1v1h-1zM10 11h4v1h-4zM8 13h2v1h-2zM16 13h2v1h-2zM12 15h2v1h-2z" fill="#fff"/></svg>
<svg style="left:243px;top:50px" width="13" height="13" shape-rendering="crispEdges"><path d="M0 0h13v1h-13zM0 1h1v1h-1zM12 1h1v1h-1zM0 2h2v1h-2zM4 2h6v1h-6zM12 2h1v1h-1zM1 3h2v1h-2zM5 3h1v1h-1zM9 3h4v1h-4zM2 4h2v1h-2zM6 4h1v1h-1zM3 5h2v1h-2zM7 5h1v1h-1zM4 6h1v1h-1zM7 6h1v1h-1zM3 7h1v1h-1zM6 7h2v1h-2zM2 8h1v1h-1zM5 8h2v1h-2zM10 8h3v1h-3zM1 9h1v1h-1zM4 9h6v1h-6zM12 9h1v1h-1zM0 10h1v1h-1zM12 10h1v1h-1zM0 11h1v1h-1zM12 11h1v1h-1zM0 12h13v1h-13z" fill="#000"/><path d="M1 1h11v1h-11zM2 2h2v1h-2zM10 2h2v1h-2zM3 3h2v1h-2zM4 4h2v1h-2zM5 5h2v1h-2zM5 6h2v1h-2zM4 7h2v1h-2zM3 8h2v1h-2zM2 9h2v1h-2zM10 9h2v1h-2zM1 10h11v1h-11zM1 11h11v1h-11z" fill="#f00"/></svg>
<svg style="left:265px;top:50px" width="15" height="13" shape-rendering="crispEdges"><path d="M0 0h14v1h-14zM0 1h14v1h-14zM0 2h2v1h-2zM12 2h2v1h-2zM0 3h2v1h-2zM12 3h2v1h-2zM0 4h2v1h-2zM12 4h2v1h-2zM0 5h2v1h-2zM12 5h2v1h-2zM0 6h2v1h-2zM12 6h2v1h-2zM0 7h2v1h-2zM12 7h2v1h-2zM0 8h2v1h-2zM12 8h2v1h-2zM0 9h2v1h-2zM12 9h2v1h-2zM0 10h14v1h-14zM0 11h14v1h-14z" fill="#808080"/><path d="M14 1h1v1h-1zM2 2h10v1h-10zM14 2h1v1h-1zM2 3h1v1h-1zM14 3h1v1h-1zM2 4h1v1h-1zM14 4h1v1h-1zM2 5h1v1h-1zM14 5h1v1h-1zM2 6h1v1h-1zM14 6h1v1h-1zM2 7h1v1h-1zM14 7h1v1h-1zM2 8h1v1h-1zM14 8h1v1h-1zM2 9h1v1h-1zM14 9h1v1h-1zM14 10h1v1h-1zM14 11h1v1h-1zM1 12h14v1h-14z" fill="#fff"/></svg>
<svg style="left:288px;top:52px" width="14" height="9" shape-rendering="crispEdges"><path d="M11 0h2v1h-2zM9 1h4v1h-4zM7 2h4v1h-4zM5 3h4v1h-4zM3 4h4v1h-4zM1 5h4v1h-4zM0 6h3v1h-3zM0 7h1v1h-1z" fill="#808080"/><path d="M13 1h1v1h-1zM11 2h2v1h-2zM9 3h2v1h-2zM7 4h2v1h-2zM5 5h2v1h-2zM3 6h2v1h-2zM1 7h2v1h-2zM1 8h1v1h-1z" fill="#fff"/></svg>
<svg style="left:318px;top:49px" width="16" height="14" shape-rendering="crispEdges"><path d="M5 0h9v1h-9zM4 1h1v1h-1zM13 1h1v1h-1zM4 2h1v1h-1zM6 2h5v1h-5zM13 2h1v1h-1zM3 3h1v1h-1zM12 3h1v1h-1zM3 4h1v1h-1zM5 4h5v1h-5zM12 4h1v1h-1zM14 4h1v1h-1zM2 5h1v1h-1zM11 5h1v1h-1zM13 5h1v1h-1zM15 5h1v1h-1zM1 6h10v1h-10zM12 6h1v1h-1zM15 6h1v1h-1zM0 7h1v1h-1zM11 7h1v1h-1zM13 7h1v1h-1zM15 7h1v1h-1zM0 8h12v1h-12zM14 8h1v1h-1zM0 9h1v1h-1zM12 9h1v1h-1zM14 9h1v1h-1zM0 10h1v1h-1zM12 10h1v1h-1zM14 10h1v1h-1zM0 11h13v1h-13zM14 11h1v1h-1zM1 12h1v1h-1zM11 12h1v1h-1zM13 12h1v1h-1zM2 13h11v1h-11z" fill="#000"/><path d="M5 1h8v1h-8zM5 2h1v1h-1zM11 2h2v1h-2zM4 3h8v1h-8zM4 4h1v1h-1zM10 4h2v1h-2zM13 4h1v1h-1zM3 5h8v1h-8zM12 5h1v1h-1zM14 5h1v1h-1zM11 6h1v1h-1zM13 6h1v1h-1zM1 7h10v1h-10zM13 8h1v1h-1zM13 9h1v1h-1zM13 10h1v1h-1zM13 11h1v1h-1zM12 12h1v1h-1z" fill="#fff"/><path d="M12 7h1v1h-1z" fill="#c0c0c0"/><path d="M1 9h6v1h-6zM10 9h2v1h-2zM1 10h6v1h-6zM10 10h2v1h-2zM2 12h9v1h-9z" fill="#dfdfdf"/><path d="M7 9h3v1h-3zM7 10h3v1h-3z" fill="#ff0"/></svg>
<svg style="left:344px;top:49px" width="10" height="14" shape-rendering="crispEdges"><path d="M2 0h6v1h-6zM1 1h1v1h-1zM7 1h1v1h-1zM0 2h1v1h-1zM2 2h2v1h-2zM6 2h1v1h-1zM8 2h2v1h-2zM0 3h1v1h-1zM2 3h1v1h-1zM6 3h1v1h-1zM8 3h2v1h-2zM0 4h1v1h-1zM2 4h1v1h-1zM5 4h1v1h-1zM8 4h1v1h-1zM0 5h3v1h-3zM4 5h1v1h-1zM7 5h2v1h-2zM3 6h1v1h-1zM6 6h1v1h-1zM3 7h1v1h-1zM5 7h2v1h-2zM3 8h1v1h-1zM5 8h1v1h-1zM3 9h1v1h-1zM5 9h1v1h-1zM3 10h3v1h-3zM3 11h1v1h-1zM6 11h2v1h-2zM3 12h1v1h-1zM6 12h2v1h-2zM4 13h3v1h-3z" fill="#000"/><path d="M2 1h5v1h-5zM1 2h1v1h-1zM7 2h1v1h-1zM1 3h1v1h-1zM7 3h1v1h-1zM1 4h1v1h-1zM6 4h2v1h-2zM5 5h2v1h-2zM4 6h2v1h-2zM4 7h1v1h-1zM4 8h1v1h-1zM4 9h1v1h-1zM4 11h2v1h-2zM4 12h2v1h-2z" fill="#ff0"/></svg>
<svg style="left:219px;top:685px" width="10" height="10" shape-rendering="crispEdges"><path d="M0 0h3v1h-3zM7 0h3v1h-3zM0 1h10v1h-10zM0 2h1v1h-1zM2 2h1v1h-1zM7 2h1v1h-1zM9 2h1v1h-1zM0 3h3v1h-3zM7 3h3v1h-3zM0 4h1v1h-1zM2 4h1v1h-1zM7 4h1v1h-1zM9 4h1v1h-1zM0 5h3v1h-3zM7 5h3v1h-3zM0 6h1v1h-1zM2 6h1v1h-1zM7 6h1v1h-1zM9 6h1v1h-1zM0 7h10v1h-10zM0 8h3v1h-3zM7 8h3v1h-3zM0 9h3v1h-3zM7 9h3v1h-3z" fill="#000"/></svg>
<svg style="left:242px;top:686px" width="12" height="11" shape-rendering="crispEdges"><path d="M0 0h1v1h-1zM0 1h1v1h-1zM0 2h1v1h-1zM0 3h1v1h-1zM0 4h1v1h-1zM0 5h1v1h-1zM0 6h1v1h-1zM0 7h1v1h-1zM0 8h1v1h-1zM0 9h1v1h-1zM0 10h12v1h-12z" fill="#000"/><path d="M3 1h1v1h-1zM2 2h2v1h-2zM2 3h2v1h-2zM11 3h1v1h-1zM1 4h3v1h-3zM10 4h1v1h-1zM1 5h1v1h-1zM4 5h1v1h-1zM10 5h1v1h-1zM4 6h1v1h-1zM6 6h1v1h-1zM9 6h1v1h-1zM4 7h3v1h-3zM8 7h1v1h-1zM4 8h1v1h-1zM7 8h2v1h-2zM7 9h1v1h-1z" fill="#00f"/></svg>
<svg style="left:264px;top:685px" width="12" height="11" shape-rendering="crispEdges"><path d="M0 0h1v1h-1zM0 1h1v1h-1zM0 2h1v1h-1zM0 3h1v1h-1zM0 4h1v1h-1zM0 5h1v1h-1zM0 6h1v1h-1zM0 7h1v1h-1zM0 8h1v1h-1zM0 9h1v1h-1zM0 10h12v1h-12z" fill="#000"/><path d="M5 1h2v1h-2zM2 2h2v1h-2zM5 2h2v1h-2zM2 3h2v1h-2zM5 3h2v1h-2zM2 4h2v1h-2zM5 4h2v1h-2zM8 4h2v1h-2zM2 5h2v1h-2zM5 5h2v1h-2zM8 5h2v1h-2zM2 6h2v1h-2zM5 6h2v1h-2zM8 6h2v1h-2zM2 7h2v1h-2zM5 7h2v1h-2zM8 7h2v1h-2zM2 8h2v1h-2zM5 8h2v1h-2zM8 8h2v1h-2zM2 9h2v1h-2zM5 9h2v1h-2zM8 9h2v1h-2z" fill="#00f"/></svg>
<svg style="left:287px;top:685px" width="11" height="10" shape-rendering="crispEdges"><path d="M0 0h11v1h-11zM0 1h1v1h-1zM3 1h1v1h-1zM6 1h1v1h-1zM9 1h1v1h-1zM0 2h1v1h-1zM3 2h1v1h-1zM6 2h1v1h-1zM9 2h1v1h-1zM0 3h10v1h-10zM0 4h1v1h-1zM3 4h1v1h-1zM6 4h1v1h-1zM9 4h1v1h-1zM0 5h1v1h-1zM3 5h1v1h-1zM6 5h1v1h-1zM9 5h1v1h-1zM0 6h9v1h-9zM1 7h1v1h-1zM3 7h1v1h-1zM6 7h1v1h-1zM2 8h2v1h-2zM6 8h2v1h-2zM3 9h4v1h-4z" fill="#000"/><path d="M1 1h2v1h-2zM4 1h2v1h-2zM7 1h2v1h-2zM10 1h1v1h-1zM1 2h2v1h-2zM4 2h2v1h-2zM7 2h2v1h-2zM10 2h1v1h-1zM1 4h2v1h-2zM1 5h2v1h-2zM2 7h1v1h-1z" fill="#0ff"/><path d="M4 4h2v1h-2zM7 4h2v1h-2zM4 5h2v1h-2zM7 5h2v1h-2zM4 7h2v1h-2zM7 7h2v1h-2zM4 8h2v1h-2z" fill="#fff"/></svg>
<svg style="left:311px;top:685px" width="10" height="11" shape-rendering="crispEdges"><path d="M2 0h6v1h-6zM1 1h8v1h-8zM0 2h3v1h-3zM7 2h2v1h-2zM0 3h3v1h-3zM6 3h1v1h-1zM8 3h1v1h-1zM0 4h4v1h-4zM6 4h1v1h-1zM9 4h1v1h-1zM0 5h4v1h-4zM8 5h1v1h-1zM0 6h2v1h-2zM8 6h1v1h-1zM1 7h3v1h-3zM8 7h1v1h-1zM2 8h2v1h-2zM5 8h3v1h-3zM3 9h1v1h-1zM7 9h1v1h-1zM2 10h7v1h-7z" fill="#000"/><path d="M3 2h4v1h-4zM3 3h3v1h-3zM7 3h1v1h-1zM4 4h2v1h-2zM7 4h1v1h-1zM4 5h4v1h-4zM2 6h6v1h-6zM4 7h4v1h-4zM4 8h1v1h-1zM8 8h1v1h-1zM4 9h3v1h-3z" fill="#c0c0c0"/></svg>
<svg style="left:341px;top:685px" width="11" height="11" shape-rendering="crispEdges"><path d="M0 0h2v1h-2zM3 0h2v1h-2zM10 0h1v1h-1zM0 1h2v1h-2zM3 1h2v1h-2zM9 1h2v1h-2zM0 2h2v1h-2zM3 2h2v1h-2zM8 2h3v1h-3zM0 3h2v1h-2zM3 3h2v1h-2zM7 3h4v1h-4zM0 4h2v1h-2zM3 4h2v1h-2zM6 4h5v1h-5zM0 5h2v1h-2zM3 5h8v1h-8zM0 6h2v1h-2zM3 6h2v1h-2zM6 6h5v1h-5zM0 7h2v1h-2zM3 7h2v1h-2zM7 7h4v1h-4zM0 8h2v1h-2zM3 8h2v1h-2zM8 8h3v1h-3zM0 9h2v1h-2zM3 9h2v1h-2zM9 9h2v1h-2zM0 10h2v1h-2zM3 10h2v1h-2zM10 10h1v1h-1z" fill="#000"/></svg>
<svg style="left:365px;top:685px" width="10" height="11" shape-rendering="crispEdges"><path d="M0 0h2v1h-2zM9 0h1v1h-1zM0 1h2v1h-2zM8 1h2v1h-2zM0 2h2v1h-2zM7 2h3v1h-3zM0 3h2v1h-2zM6 3h4v1h-4zM0 4h2v1h-2zM5 4h5v1h-5zM0 5h2v1h-2zM4 5h6v1h-6zM0 6h2v1h-2zM5 6h5v1h-5zM0 7h2v1h-2zM6 7h4v1h-4zM0 8h2v1h-2zM7 8h3v1h-3zM0 9h2v1h-2zM8 9h2v1h-2zM0 10h2v1h-2zM9 10h1v1h-1z" fill="#000"/></svg>
<svg style="left:626px;top:685px" width="7" height="11" shape-rendering="crispEdges"><path d="M0 0h1v1h-1zM0 1h2v1h-2zM0 2h3v1h-3zM0 3h4v1h-4zM0 4h5v1h-5zM0 5h6v1h-6zM0 6h5v1h-5zM0 7h4v1h-4zM0 8h3v1h-3zM0 9h2v1h-2zM0 10h1v1h-1z" fill="#000"/></svg>
<svg style="left:648px;top:687px" width="8" height="7" shape-rendering="crispEdges"><path d="M0 0h8v1h-8zM0 1h8v1h-8zM0 2h8v1h-8zM0 3h8v1h-8zM0 4h8v1h-8zM0 5h8v1h-8zM0 6h8v1h-8z" fill="#000"/></svg>
<svg style="left:669px;top:684px" width="12" height="11" shape-rendering="crispEdges"><path d="M6 0h1v1h-1zM6 1h2v1h-2zM3 2h6v1h-6zM2 3h6v1h-6zM1 4h2v1h-2zM6 4h2v1h-2zM0 5h2v1h-2zM6 5h1v1h-1zM0 6h2v1h-2zM10 6h2v1h-2zM0 7h2v1h-2zM10 7h2v1h-2zM1 8h2v1h-2zM9 8h2v1h-2zM2 9h8v1h-8zM3 10h6v1h-6z" fill="#000"/></svg>
<svg style="left:701px;top:685px" width="10" height="11" shape-rendering="crispEdges"><path d="M0 0h1v1h-1zM8 0h2v1h-2zM0 1h2v1h-2zM8 1h2v1h-2zM0 2h3v1h-3zM8 2h2v1h-2zM0 3h4v1h-4zM8 3h2v1h-2zM0 4h5v1h-5zM8 4h2v1h-2zM0 5h6v1h-6zM8 5h2v1h-2zM0 6h5v1h-5zM8 6h2v1h-2zM0 7h4v1h-4zM8 7h2v1h-2zM0 8h3v1h-3zM8 8h2v1h-2zM0 9h2v1h-2zM8 9h2v1h-2zM0 10h1v1h-1zM8 10h2v1h-2z" fill="#000"/></svg>
<svg style="left:723px;top:685px" width="12" height="11" shape-rendering="crispEdges"><path d="M0 0h1v1h-1zM7 0h2v1h-2zM10 0h2v1h-2zM0 1h2v1h-2zM7 1h2v1h-2zM10 1h2v1h-2zM0 2h3v1h-3zM7 2h2v1h-2zM10 2h2v1h-2zM0 3h4v1h-4zM7 3h2v1h-2zM10 3h2v1h-2zM0 4h5v1h-5zM7 4h2v1h-2zM10 4h2v1h-2zM0 5h6v1h-6zM7 5h2v1h-2zM10 5h2v1h-2zM0 6h5v1h-5zM7 6h2v1h-2zM10 6h2v1h-2zM0 7h4v1h-4zM7 7h2v1h-2zM10 7h2v1h-2zM0 8h3v1h-3zM7 8h2v1h-2zM10 8h2v1h-2zM0 9h2v1h-2zM7 9h2v1h-2zM10 9h2v1h-2zM0 10h1v1h-1zM7 10h2v1h-2zM10 10h2v1h-2z" fill="#000"/></svg>
<svg style="left:745px;top:684px" width="13" height="12" shape-rendering="crispEdges"><path d="M4 0h5v1h-5zM2 1h2v1h-2zM6 1h1v1h-1zM9 1h2v1h-2zM1 2h1v1h-1zM6 2h1v1h-1zM11 2h1v1h-1zM1 3h1v1h-1zM6 3h1v1h-1zM11 3h1v1h-1zM0 4h1v1h-1zM6 4h1v1h-1zM12 4h1v1h-1zM0 5h1v1h-1zM6 5h2v1h-2zM12 5h1v1h-1zM0 6h1v1h-1zM8 6h1v1h-1zM12 6h1v1h-1zM0 7h1v1h-1zM9 7h1v1h-1zM12 7h1v1h-1zM1 8h1v1h-1zM9 8h1v1h-1zM11 8h1v1h-1zM1 9h1v1h-1zM11 9h1v1h-1zM2 10h2v1h-2zM9 10h2v1h-2zM4 11h5v1h-5z" fill="#000"/><path d="M4 1h2v1h-2zM7 1h2v1h-2zM2 2h4v1h-4zM7 2h4v1h-4zM2 3h4v1h-4zM7 3h4v1h-4zM1 4h5v1h-5zM7 4h5v1h-5zM1 5h5v1h-5zM8 5h4v1h-4zM1 6h7v1h-7zM9 6h3v1h-3zM1 7h8v1h-8zM10 7h2v1h-2zM2 8h7v1h-7zM10 8h1v1h-1zM2 9h9v1h-9zM4 10h5v1h-5z" fill="#fff"/></svg>
</body></html>
